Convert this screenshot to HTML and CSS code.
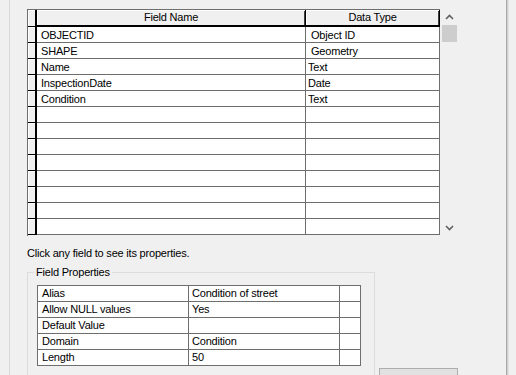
FILE: index.html
```html
<!DOCTYPE html>
<html>
<head>
<meta charset="utf-8">
<link rel="stylesheet" href="styles.css">
</head>
<body>
<div class="edge-left"></div>
<div class="main">
  <div class="grid-area">
    <div class="grid">
      <div class="sel hdr"></div>
      <div class="hcell">Field Name</div>
      <div class="hcell">Data Type</div>

      <div class="sel"></div><div class="cell">OBJECTID</div><div class="cell pad5">Object ID</div>
      <div class="sel"></div><div class="cell">SHAPE</div><div class="cell pad5">Geometry</div>
      <div class="sel"></div><div class="cell">Name</div><div class="cell pad3">Text</div>
      <div class="sel"></div><div class="cell">InspectionDate</div><div class="cell pad3">Date</div>
      <div class="sel"></div><div class="cell">Condition</div><div class="cell pad3">Text</div>
      <div class="sel"></div><div class="cell"></div><div class="cell"></div>
      <div class="sel"></div><div class="cell"></div><div class="cell"></div>
      <div class="sel"></div><div class="cell"></div><div class="cell"></div>
      <div class="sel"></div><div class="cell"></div><div class="cell"></div>
      <div class="sel"></div><div class="cell"></div><div class="cell"></div>
      <div class="sel"></div><div class="cell"></div><div class="cell"></div>
      <div class="sel"></div><div class="cell"></div><div class="cell"></div>
      <div class="sel"></div><div class="cell"></div><div class="cell"></div>
    </div>
    <div class="scrollbar">
      <div class="sb-btn">
        <svg width="9" height="6" viewBox="0 0 9 6"><path d="M1 5 L4.5 1.5 L8 5" fill="none" stroke="#606060" stroke-width="1.6"/></svg>
      </div>
      <div class="sb-thumb"></div>
      <div class="sb-track"></div>
      <div class="sb-btn">
        <svg width="9" height="6" viewBox="0 0 9 6"><path d="M1 1 L4.5 4.5 L8 1" fill="none" stroke="#606060" stroke-width="1.6"/></svg>
      </div>
    </div>
  </div>
  <p class="hint">Click any field to see its properties.</p>
  <div class="bottom">
    <fieldset class="props">
      <legend>Field Properties</legend>
      <div class="ptable">
        <div class="pcell">Alias</div><div class="pcell val">Condition of street</div><div class="pcell"></div>
        <div class="pcell">Allow NULL values</div><div class="pcell val">Yes</div><div class="pcell"></div>
        <div class="pcell">Default Value</div><div class="pcell val"></div><div class="pcell"></div>
        <div class="pcell">Domain</div><div class="pcell val">Condition</div><div class="pcell"></div>
        <div class="pcell">Length</div><div class="pcell val">50</div><div class="pcell"></div>
      </div>
    </fieldset>
    <div class="button"></div>
  </div>
</div>
<div class="edge-right"></div>
</body>
</html>
```
FILE: styles.css
```css
html, body {
  margin: 0;
  padding: 0;
}
body {
  width: 516px;
  height: 375px;
  overflow: hidden;
  background: #f0f0f0;
  display: flex;
  font-family: "Liberation Sans", Arial, sans-serif;
  font-size: 11px;
  letter-spacing: -0.2px;
  color: #000;
}
.edge-left {
  flex: none;
  width: 9px;
  border-right: 1px solid #d9d9d9;
}
.main {
  flex: none;
  width: 479px;
  height: 366px;
  overflow: hidden;
  padding: 9px 0 0 17px;
}
.edge-right {
  flex: none;
  width: 1px;
  background: #a9a9a9;
  box-shadow: 1px 0 0 #cfcfcf, 2px 0 0 #e2e2e2;
}
.grid-area {
  display: flex;
  height: 227px;
}
.grid {
  flex: none;
  display: grid;
  grid-template-columns: 9px 269px 134px;
  grid-template-rows: 17px repeat(13, 16px);
  border-left: 1px solid #6e6e6e;
  border-top: 1px solid #6e6e6e;
  align-content: start;
}
.sel {
  box-sizing: border-box;
  background: #f0f0f0;
  border-right: 2px solid #000;
  border-bottom: 1px solid #000;
  box-shadow: inset 1px 1px 0 #fff;
}
.hcell {
  box-sizing: border-box;
  background: #f0f0f0;
  border-right: 1px solid #000;
  border-bottom: 2px solid #000;
  box-shadow: inset 1px 1px 0 #fff, inset -1px 0 0 #404040;
  text-align: center;
  line-height: 15px;
}
.cell {
  box-sizing: border-box;
  background: #fff;
  border-right: 1px solid #6e6e6e;
  border-bottom: 1px solid #6e6e6e;
  padding: 1px 0 0 4px;
  line-height: 14px;
  white-space: nowrap;
}
.cell.pad5 { padding-left: 5px; }
.cell.pad3 { padding-left: 2px; }
.scrollbar {
  flex: none;
  width: 17px;
  margin-left: 1px;
  display: flex;
  flex-direction: column;
}
.sb-btn {
  height: 16px;
  display: flex;
  align-items: center;
  justify-content: center;
}
.sb-thumb {
  height: 17px;
  margin: 0 1px;
  background: #cdcdcd;
}
.sb-track {
  flex: 1;
}
.hint {
  margin: 11px 0 0 0;
  line-height: 13px;
}
.bottom {
  display: flex;
  align-items: flex-start;
  margin-top: 6px;
}
.props {
  flex: none;
  box-sizing: border-box;
  width: 348px;
  height: 120px;
  margin: 0;
  padding: 6px 0 0 6px;
  border: 1px solid #dcdcdc;
}
.props legend {
  padding: 0 2px;
  line-height: 13px;
}
.ptable {
  margin-left: 3px;
  display: grid;
  grid-template-columns: 151px 151px 21px;
  grid-template-rows: repeat(5, 16px);
  border-left: 1px solid #6e6e6e;
  border-top: 1px solid #6e6e6e;
  width: 323px;
}
.pcell {
  box-sizing: border-box;
  background: #fff;
  border-right: 1px solid #6e6e6e;
  border-bottom: 1px solid #6e6e6e;
  padding-left: 4px;
  line-height: 15px;
  white-space: nowrap;
}
.pcell.val { padding-left: 3px; }
.button {
  flex: none;
  box-sizing: border-box;
  width: 79px;
  height: 20px;
  margin: 102px 0 0 4px;
  background: #e1e1e1;
  border: 1px solid #adadad;
}
```
